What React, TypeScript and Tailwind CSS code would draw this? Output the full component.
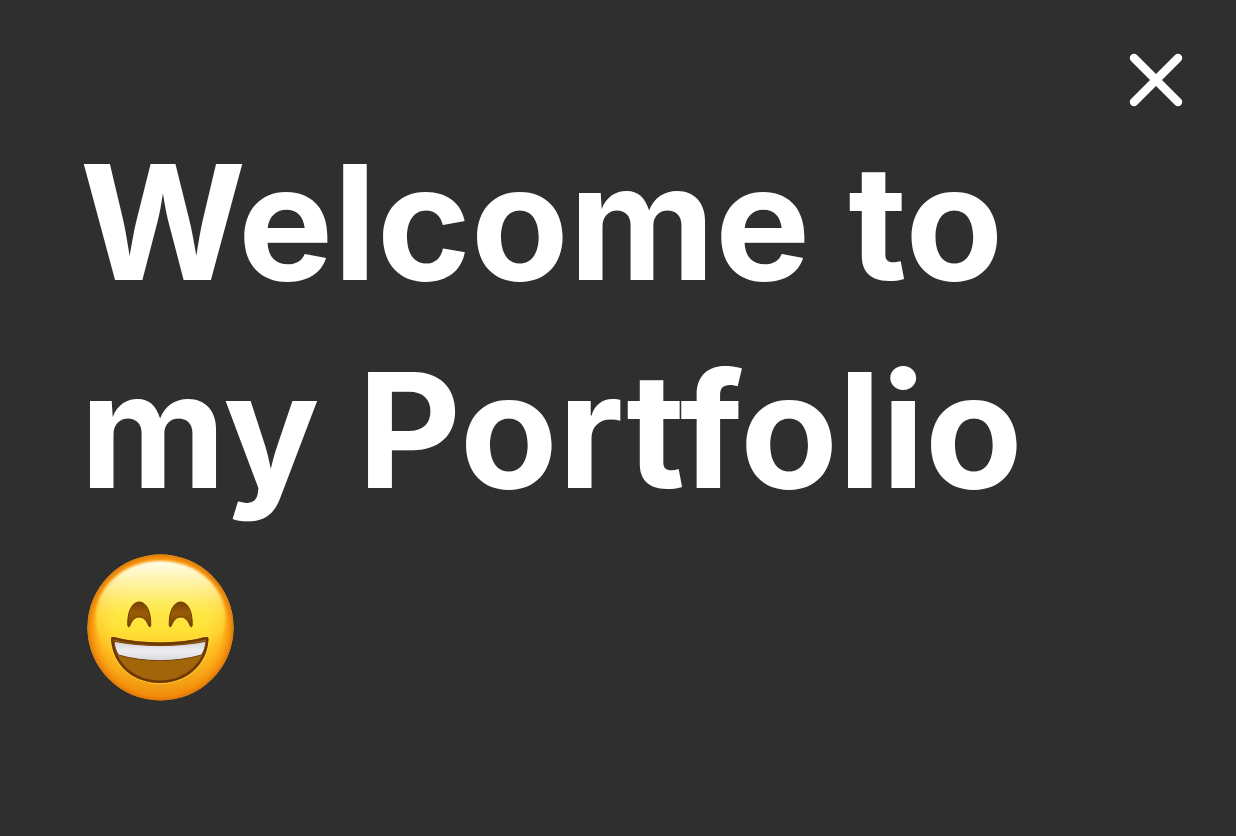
import { X } from 'lucide-react';

const GrinningFace = () => {
  return (
    <svg
      role="img"
      aria-label="Grinning face with smiling eyes"
      viewBox="7 9 147 147"
      className="inline-block w-[147px] h-[147px] ml-[7px] -mb-[5px] align-baseline"
    >
      <defs>
        <linearGradient id="face" x1="0" y1="0" x2="0" y2="1">
          <stop offset="0" stopColor="#ffc62a" />
          <stop offset="0.5" stopColor="#ffdc2c" />
          <stop offset="0.68" stopColor="#fdc928" />
          <stop offset="0.88" stopColor="#eda316" />
          <stop offset="1" stopColor="#d98008" />
        </linearGradient>
        <radialGradient id="rim" cx="0.5" cy="0.5" r="0.5">
          <stop offset="0.62" stopColor="#ffa010" stopOpacity="0" />
          <stop offset="0.84" stopColor="#fc9c10" stopOpacity="0.45" />
          <stop offset="0.94" stopColor="#f78c0a" stopOpacity="0.85" />
          <stop offset="1" stopColor="#dd7608" stopOpacity="0.95" />
        </radialGradient>
        <linearGradient id="shine" x1="0" y1="0" x2="0" y2="1">
          <stop offset="0" stopColor="#fffeec" />
          <stop offset="0.2" stopColor="#fffab8" stopOpacity="0.85" />
          <stop offset="0.45" stopColor="#fff35a" stopOpacity="0.6" />
          <stop offset="0.8" stopColor="#ffe83a" stopOpacity="0" />
        </linearGradient>
        <linearGradient id="eye" x1="0" y1="0" x2="0" y2="1">
          <stop offset="0" stopColor="#7a4300" />
          <stop offset="0.45" stopColor="#985c06" />
          <stop offset="1" stopColor="#7a4300" />
        </linearGradient>
        <linearGradient id="teeth" x1="0" y1="0" x2="0" y2="1">
          <stop offset="0" stopColor="#d3d3d8" />
          <stop offset="0.5" stopColor="#eeeef2" />
          <stop offset="1" stopColor="#d8d8dd" />
        </linearGradient>
        <filter id="soft" x="-10%" y="-10%" width="120%" height="120%">
          <feGaussianBlur stdDeviation="1.2" />
        </filter>
        <clipPath id="mouth">
          <path d="M31 94 C31 91.5 33 91.5 36 92.5 C62 99 98 99 123 92.5 C127 91.5 128.5 91.5 128.5 94 C127 122 104 138 80 138 C55 138 33 122 31 94 Z" />
        </clipPath>
      </defs>

      <circle cx="80.5" cy="82.5" r="73" fill="url(#face)" />
      <circle cx="80.5" cy="82.5" r="73" fill="url(#rim)" />
      <ellipse cx="80.5" cy="73" rx="65" ry="57" fill="url(#shine)" filter="url(#soft)" />

      {/* Eyes */}
      <g fill="url(#eye)" stroke="#6d3a00" strokeWidth="1">
        <path d="M47.8 80.5 C47.2 67 52 57 59.2 57 C66.5 57 71.3 67 70.7 80.5 C70.5 82.2 69.3 82.2 68.7 80.8 C66.5 75 63.2 72 59.2 72 C55.2 72 52 75 49.8 80.8 C49.2 82.2 48 82.2 47.8 80.5 Z" />
        <path d="M89.3 80.5 C88.7 67 93.5 57 100.7 57 C108 57 112.8 67 112.2 80.5 C112 82.2 110.8 82.2 110.2 80.8 C108 75 104.7 72 100.7 72 C96.7 72 93.5 75 91.3 80.8 C90.7 82.2 89.5 82.2 89.3 80.5 Z" />
      </g>

      {/* Mouth */}
      <path
        d="M31 94 C31 91.5 33 91.5 36 92.5 C62 99 98 99 123 92.5 C127 91.5 128.5 91.5 128.5 94 C127 122 104 138 80 138 C55 138 33 122 31 94 Z"
        fill="none"
        stroke="#ffd84a"
        strokeOpacity="0.5"
        strokeWidth="2.5"
      />
      <g clipPath="url(#mouth)">
        <rect x="28" y="88" width="104" height="52" fill="#a3650a" />
        <path
          d="M31 94 C31 91.5 33 91.5 36 92.5 C62 99 98 99 123 92.5 C127 91.5 128.5 91.5 128.5 94 C127 122 104 138 80 138 C55 138 33 122 31 94 Z"
          fill="none"
          stroke="#6d3900"
          strokeWidth="5"
        />
        <path
          d="M34 96.3 C62 102 98 102 126 96.3 C125.5 102 124 106 121.5 110 C96 117.5 64 117.5 38.5 110 C36 106 34.5 102 34 96.3 Z"
          fill="url(#teeth)"
          stroke="#74400a"
          strokeWidth="1"
        />
      </g>
    </svg>
  );
};

export default function App() {
  return (
    <main className="flex items-start min-h-screen bg-[#2f2f2f] pl-20 pr-9 pt-9 text-white font-['Inter',sans-serif]">
      <h1 className="flex-1 pt-[82px] text-[160px] leading-[208px] font-bold">
        Welcome to my Portfolio <GrinningFace />
      </h1>
      <button type="button" aria-label="Close" className="shrink-0 cursor-pointer">
        <X size={88} strokeWidth={2.3} />
      </button>
    </main>
  );
}
